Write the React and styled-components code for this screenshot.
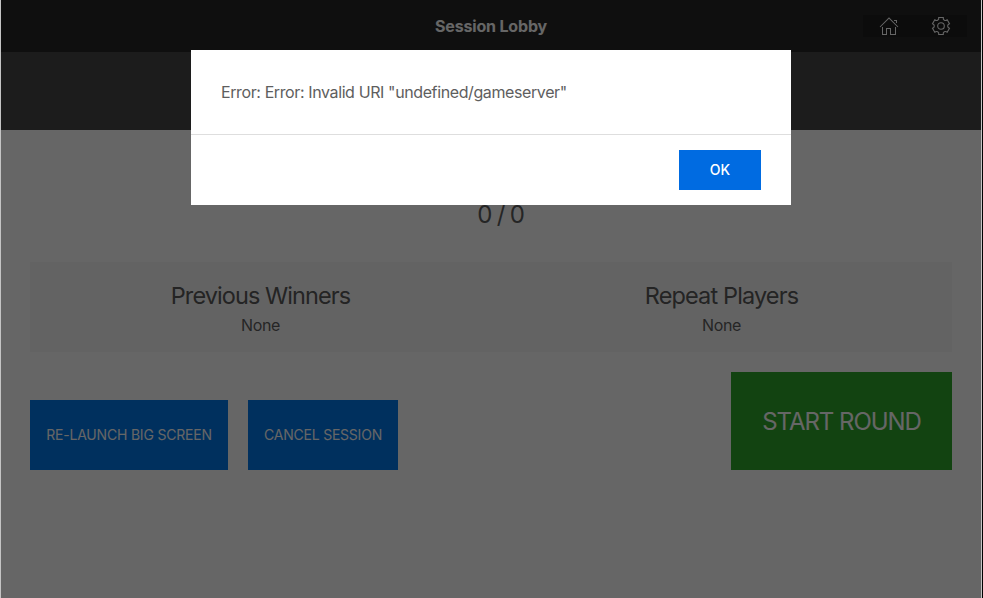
import React from 'react';
import styled, { createGlobalStyle } from 'styled-components';

const GlobalStyle = createGlobalStyle`
  * { box-sizing: border-box; }
  body {
    margin: 0;
    background: #000;
    color: #5e5e5e;
    font: 400 16px/24px Inter, 'Liberation Sans', sans-serif;
    overflow: hidden;
  }
  h1, h2, p { margin: 0; }
`;

const Window = styled.div`
  position: relative;
  width: 982px;
  height: 598px;
  border: solid #c4c4c4;
  border-width: 0 1px;
  background: #fff;
`;

const TopBar = styled.header`
  display: grid;
  grid-template-columns: 1fr auto 1fr;
  align-items: center;
  height: 52px;
  padding: 0 14px;
  background: #262626;
`;

const Title = styled.h1`
  grid-column: 2;
  color: #fff;
  font-size: 16px;
  line-height: 24px;
  font-weight: 700;
  letter-spacing: -0.16px;
`;

const Tools = styled.nav`
  display: flex;
  justify-self: end;
`;

const Tool = styled.button`
  display: flex;
  padding: 1px 16px;
  border: 0;
  background: #1e1e1e;
  color: #fff;
`;

const Icon = styled.svg`
  width: 20px;
  height: 20px;
  fill: ${(p) => (p.$outlined ? 'none' : 'currentColor')};
  stroke: ${(p) => (p.$outlined ? 'currentColor' : 'none')};
  stroke-width: 1.1;
`;

const Band = styled.div`
  height: 78px;
  background: #464646;
`;

const Content = styled.main`
  padding: 68px 29px 0;
`;

const Count = styled.p`
  height: 64px;
  padding-left: 20px;
  text-align: center;
  font-size: 24px;
  line-height: 34px;
  letter-spacing: 0;
  word-spacing: -2.4px;
`;

const Summary = styled.section`
  display: grid;
  grid-template-columns: 1fr 1fr;
  height: 90px;
  padding-top: 17px;
  background: #f8f8f8;
  text-align: center;
`;

const Heading = styled.h2`
  color: #5a5a5a;
  font-size: 23.5px;
  line-height: 34px;
  font-weight: 400;
  letter-spacing: ${(p) => p.$tracking};
`;

const Names = styled.p`
  line-height: 25px;
  letter-spacing: -0.3px;
`;

const Actions = styled.div`
  display: flex;
  align-items: flex-end;
  gap: 20px;
  margin-top: 20px;
`;

const Button = styled.button`
  width: ${(p) => p.$width}px;
  height: ${(p) => p.$height}px;
  padding: 0 0 ${(p) => (p.$green ? 0 : 2)}px;
  border: 0;
  background: ${(p) => (p.$green ? '#2da82b' : '#0078eb')};
  color: #fff;
  font-family: inherit;
  font-size: ${(p) => (p.$green ? 24 : 14)}px;
  letter-spacing: ${(p) => p.$tracking || '0'};
  white-space: nowrap;
  margin-left: ${(p) => (p.$green ? 'auto' : '0')};
`;

const Backdrop = styled.div`
  position: absolute;
  inset: 0;
  padding-top: 50px;
  background: rgba(0, 0, 0, 0.6);
`;

const Dialog = styled.div`
  width: 600px;
  margin: 0 auto;
  background: #fff;
`;

const Message = styled.p`
  height: 84px;
  padding: 30px;
  letter-spacing: -0.39px;
`;

const DialogFooter = styled.footer`
  display: flex;
  justify-content: flex-end;
  padding: 15px 30px;
  border-top: 1px solid #dedede;
`;

const ConfirmButton = styled(Button)`
  background: #006be1;
  font-weight: 500;
`;

const HomeIcon = () => (
  <Icon viewBox="0 0 20 20">
    <polygon points="18.65 11.35 10 2.71 1.35 11.35 .65 10.65 10 1.29 19.35 10.65" />
    <polygon points="15 4 18 4 18 7 17 7 17 5 15 5 15 4" />
    <polygon points="3 11 4 11 4 18 7 18 7 12 12 12 12 18 16 18 16 11 17 11 17 19 11 19 11 13 8 13 8 19 3 19 3 11" />
  </Icon>
);

const CogIcon = () => (
  <Icon viewBox="0 0 20 20" $outlined>
    <circle cx="9.997" cy="10" r="3.31" />
    <path d="M18.488,12.285 L16.205,16.237 C15.322,15.496 14.185,15.281 13.303,15.791 C12.428,16.289 12.047,17.373 12.246,18.5 L7.735,18.5 C7.938,17.374 7.553,16.299 6.684,15.791 C5.801,15.27 4.655,15.492 3.773,16.237 L1.5,12.285 C2.573,11.871 3.317,10.999 3.317,9.991 C3.305,8.98 2.573,8.121 1.5,7.716 L3.765,3.784 C4.645,4.516 5.794,4.738 6.687,4.232 C7.555,3.722 7.939,2.637 7.735,1.5 L12.263,1.5 C12.072,2.637 12.441,3.71 13.314,4.22 C14.206,4.73 15.343,4.516 16.225,3.794 L18.487,7.714 C17.404,8.117 16.661,8.988 16.67,10.009 C16.672,11.018 17.415,11.88 18.488,12.285 Z" />
  </Icon>
);

export default function App() {
  return (
    <>
      <GlobalStyle />
      <Window>
        <TopBar>
          <Title>Session Lobby</Title>
          <Tools>
            <Tool aria-label="Home"><HomeIcon /></Tool>
            <Tool aria-label="Settings"><CogIcon /></Tool>
          </Tools>
        </TopBar>
        <Band />
        <Content>
          <Count>0 / 0</Count>
          <Summary>
            <div>
              <Heading $tracking="-0.92px">Previous Winners</Heading>
              <Names>None</Names>
            </div>
            <div>
              <Heading $tracking="-0.86px">Repeat Players</Heading>
              <Names>None</Names>
            </div>
          </Summary>
          <Actions>
            <Button $width={198} $height={70} $tracking="-0.2px">RE-LAUNCH BIG SCREEN</Button>
            <Button $width={150} $height={70} $tracking="-0.22px">CANCEL SESSION</Button>
            <Button $width={221} $height={98} $green $tracking="-1.05px">START ROUND</Button>
          </Actions>
        </Content>
        <Backdrop>
          <Dialog role="dialog" aria-modal="true">
            <Message>Error: Error: Invalid URI "undefined/gameserver"</Message>
            <DialogFooter>
              <ConfirmButton $width={82} $height={40}>OK</ConfirmButton>
            </DialogFooter>
          </Dialog>
        </Backdrop>
      </Window>
    </>
  );
}
